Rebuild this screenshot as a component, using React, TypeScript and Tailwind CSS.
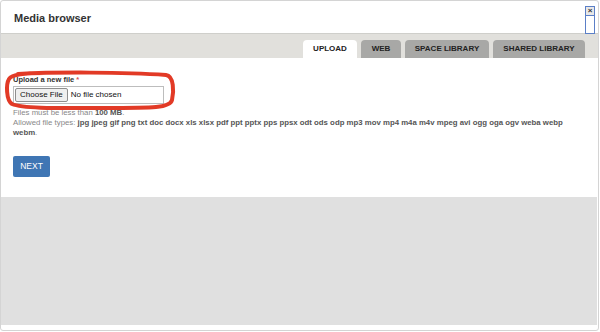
import React from "react";

export default function App() {
  return (
    <div className="w-[600px] h-[332px] bg-white overflow-hidden" style={{ fontFamily: '"Liberation Sans", Arial, sans-serif' }}>
      <div className="relative w-[599px] h-[331px] border border-[#d4d4d4] rounded-[3px] bg-white flex flex-col">
        {/* title */}
        <div className="h-[32px] flex items-center pl-[13px] pt-[2px] shrink-0">
          <span className="text-[11px] font-bold text-[#333]">Media browser</span>
        </div>
        {/* close button with focus outline */}
        <div className="absolute left-[584px] top-[5px] w-[10px] h-[28px] border border-[#5b7fc7]">
          <div className="w-full h-[9px] bg-[#e8e8e8] border-b border-[#5b7fc7] flex items-center justify-center text-[8px] leading-none font-bold text-[#333]">×</div>
        </div>
        {/* tab band */}
        <div className="h-[25px] bg-[#e1e0dc] border-t border-[#cfcfcb] flex items-end justify-end pr-[13px] gap-[4px] shrink-0">
          <div className="h-[18px] w-[54px] bg-white rounded-t-[4px] flex items-center justify-center text-[8px] font-bold text-[#222]">UPLOAD</div>
          <div className="h-[18px] w-[40px] bg-[#a8a8a6] rounded-t-[4px] flex items-center justify-center text-[8px] font-bold text-[#222]">WEB</div>
          <div className="h-[18px] w-[84px] bg-[#a8a8a6] rounded-t-[4px] flex items-center justify-center text-[8px] font-bold text-[#222]">SPACE LIBRARY</div>
          <div className="h-[18px] w-[92px] bg-[#a8a8a6] rounded-t-[4px] flex items-center justify-center text-[8px] font-bold text-[#222]">SHARED LIBRARY</div>
        </div>
        {/* content */}
        <div className="h-[139px] shrink-0 pl-[12px] pr-[24px] pt-[17px] relative">
          <div className="text-[7.5px] font-bold text-[#333] leading-[10px]">
            Upload a new file <span className="text-[#e05050]">*</span>
          </div>
          <div className="mt-[1px] w-[151px] h-[18px] border border-[#bdbdbd] flex items-center pl-[1px] gap-[3px]">
            <div className="h-[14px] px-[4px] bg-[#efefef] border border-[#8f8f8f] rounded-[2px] flex items-center text-[8px] text-[#111]">Choose File</div>
            <span className="text-[8px] text-[#111]">No file chosen</span>
          </div>
          <div className="mt-[4px] text-[7.8px] text-[#888] leading-[10px]">
            Files must be less than <b className="text-[#555]">100 MB</b>.
          </div>
          <div className="text-[7.8px] text-[#888] leading-[10px]">
            Allowed file types: <b className="text-[#555]">jpg jpeg gif png txt doc docx xls xlsx pdf ppt pptx pps ppsx odt ods odp mp3 mov mp4 m4a m4v mpeg avi ogg oga ogv weba webp webm</b>.
          </div>
          <div className="mt-[18px] w-[37px] h-[21px] bg-[#3f76b4] rounded-[2px] flex items-center justify-center text-[8.5px] text-white">NEXT</div>
          {/* red annotation ellipse */}
          <svg className="absolute left-[3px] top-[12px]" width="172" height="42" viewBox="0 0 172 42">
            <path d="M14 4 C 50 2, 120 2, 162 5 C 170 6, 170 22, 168 30 C 166 38, 150 38, 100 38 C 60 38, 20 39, 8 34 C 2 30, 2 14, 5 9 C 8 4, 20 3, 40 3" fill="none" stroke="#e23a26" strokeWidth="4" strokeLinecap="round" />
          </svg>
        </div>
        <div className="flex-1 bg-[#e0e0e0] mb-[5px] mr-[1px]"></div>
      </div>
    </div>
  );
}
